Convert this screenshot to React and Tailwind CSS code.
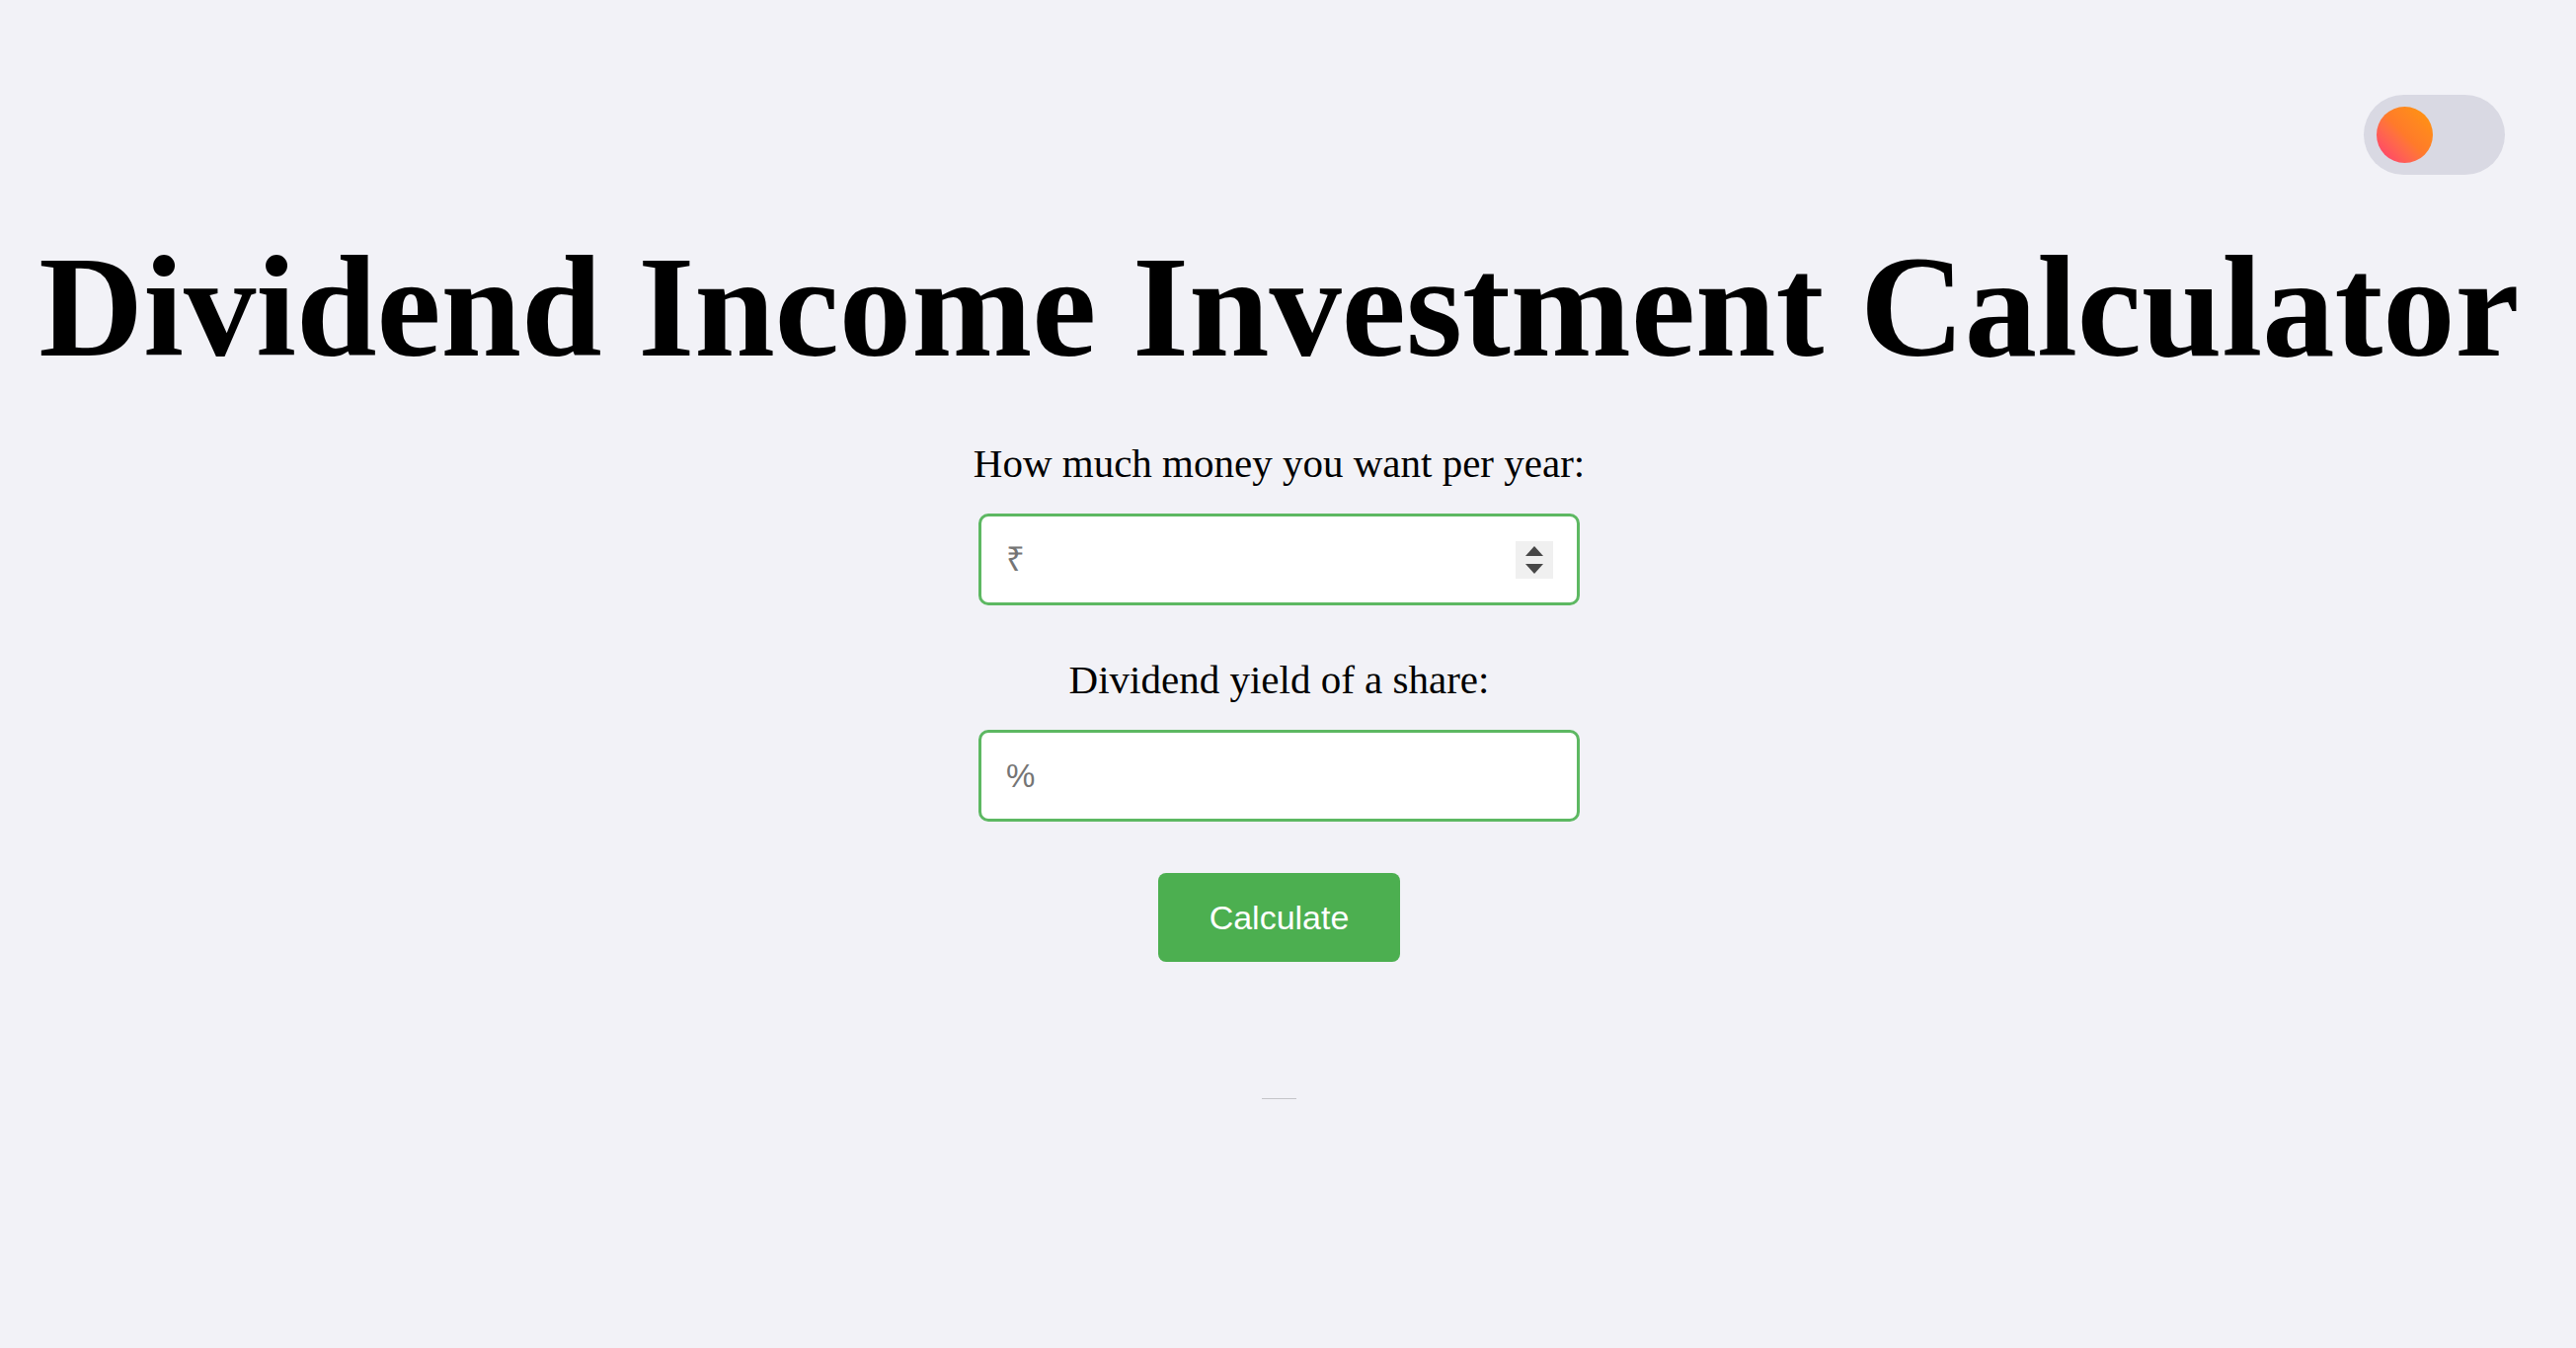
import React from "react";

function Spinner() {
  return (
    <div className="flex h-[38px] w-[38px] shrink-0 flex-col items-center justify-center gap-[8px] bg-[#f0f0f0]">
      <svg width="18" height="10" viewBox="0 0 18 10">
        <polygon points="9,0 18,10 0,10" fill="#474747" />
      </svg>
      <svg width="18" height="10" viewBox="0 0 18 10">
        <polygon points="0,0 18,0 9,10" fill="#474747" />
      </svg>
    </div>
  );
}

export default function App() {
  return (
    <div className="min-h-screen w-full bg-[#f2f2f7] font-['Liberation_Serif',serif] text-black">
      <div className="flex justify-end pr-[72px] pt-[96px]">
        <div className="flex h-[81px] w-[143px] items-center rounded-full bg-[#d9d9e3] pl-[13px]">
          <div className="h-[57px] w-[57px] rounded-full bg-linear-to-bl from-[#ff9800] via-[#ff7a2a] to-[#ff2d72]" />
        </div>
      </div>

      <div className="flex flex-col items-center pr-[18px]">
        <h1 className="mt-[61px] whitespace-nowrap text-center text-[146.6px] font-bold leading-[146px]">
          Dividend Income Investment Calculator
        </h1>

        <label className="mt-[65px] text-center text-[41px] leading-[41px]">
          How much money you want per year:
        </label>
        <div className="mt-[30px] flex h-[93px] w-[609px] items-center rounded-[10px] border-[3px] border-[#5db862] bg-white pl-[25px] pr-[24px]">
          <input
            type="text"
            inputMode="numeric"
            placeholder="₹"
            className="min-w-0 flex-1 bg-transparent font-['Liberation_Sans','Noto_Sans',sans-serif] text-[33px] text-black outline-none placeholder:text-[#757575]"
          />
          <Spinner />
        </div>

        <label className="mt-[55px] text-center text-[41px] leading-[41px]">
          Dividend yield of a share:
        </label>
        <div className="mt-[30px] flex h-[93px] w-[609px] items-center rounded-[10px] border-[3px] border-[#5db862] bg-white pl-[25px] pr-[24px]">
          <input
            type="text"
            inputMode="decimal"
            placeholder="%"
            className="min-w-0 flex-1 bg-transparent font-['Liberation_Sans','Noto_Sans',sans-serif] text-[33px] text-black outline-none placeholder:text-[#757575]"
          />
        </div>

        <button className="mt-[52px] flex h-[90px] w-[245px] items-center justify-center rounded-[8px] bg-[#4caf50] font-['Liberation_Sans',Arial,sans-serif] text-[34px] text-white">
          Calculate
        </button>

        <div className="mt-[138px] h-px w-[35px] bg-[#c4c4c8]" />
      </div>
    </div>
  );
}
